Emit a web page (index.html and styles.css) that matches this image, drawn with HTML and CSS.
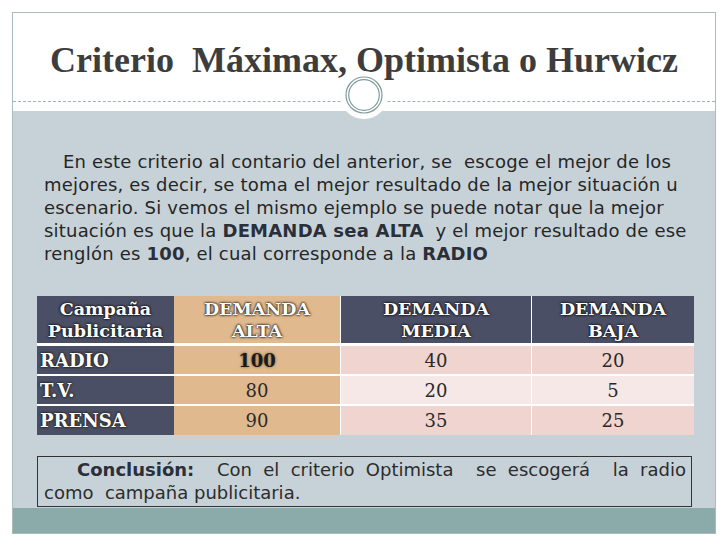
FILE: index.html
```html
<!DOCTYPE html>
<html lang="es">
<head>
<meta charset="utf-8">
<title>Criterio Máximax, Optimista o Hurwicz</title>
<link rel="stylesheet" href="styles.css">
</head>
<body>
<div class="slide">
  <header class="head">
    <h1 class="title">Criterio&nbsp; Máximax, Optimista o Hurwicz</h1>
    <div class="ornament">
      <svg width="52" height="52" viewBox="0 0 52 52">
        <circle cx="26" cy="26" r="24" fill="#ffffff"/>
        <circle cx="26" cy="26" r="18" fill="none" stroke="#7f9c9b" stroke-width="1.2"/>
        <circle cx="26" cy="26" r="15.3" fill="none" stroke="#7f9c9b" stroke-width="1.2"/>
      </svg>
    </div>
  </header>
  <main class="band">
    <p class="intro"><span class="indent"></span>En este criterio al contario del anterior, se&nbsp; escoge el mejor de los<br>mejores, es decir, se toma el mejor resultado de la mejor situación u<br>escenario. Si vemos el mismo ejemplo se puede notar que la mejor<br>situación es que la <b>DEMANDA sea ALTA</b>&nbsp; y el mejor resultado de ese<br>renglón es <b>100</b>, el cual corresponde a la <b>RADIO</b></p>
    <table class="grid">
      <thead>
        <tr>
          <th class="c1">Campaña<br>Publicitaria</th>
          <th class="c2 alta">DEMANDA<br>ALTA</th>
          <th class="c3">DEMANDA<br>MEDIA</th>
          <th class="c4">DEMANDA<br>BAJA</th>
        </tr>
      </thead>
      <tbody>
        <tr class="odd">
          <th class="label">RADIO</th>
          <td class="alta"><b class="best">100</b></td>
          <td class="sep">40</td>
          <td class="sep">20</td>
        </tr>
        <tr class="even">
          <th class="label">T.V.</th>
          <td class="alta">80</td>
          <td class="sep">20</td>
          <td class="sep">5</td>
        </tr>
        <tr class="odd last">
          <th class="label">PRENSA</th>
          <td class="alta">90</td>
          <td class="sep">35</td>
          <td class="sep">25</td>
        </tr>
      </tbody>
    </table>
    <div class="conclusion">
      <span class="line first"><b>Conclusión:</b>&nbsp; Con el criterio Optimista&nbsp; se escogerá&nbsp; la radio</span>
      <span class="line">como&nbsp; campaña publicitaria.</span>
    </div>
  </main>
  <footer class="foot"></footer>
</div>
</body>
</html>
```
FILE: styles.css
```css
html, body {
  margin: 0;
  padding: 0;
  background: #ffffff;
}

.slide {
  margin: 12px;
  width: 702px;
  height: 520px;
  border: 1px solid #a9bbbb;
  display: flex;
  flex-direction: column;
  position: relative;
}

.head {
  height: 98px;
  flex: none;
  background: #ffffff;
  position: relative;
  z-index: 2;
}

.title {
  margin: 0;
  height: 89px;
  box-sizing: border-box;
  border-bottom: 1px dashed #9fb3b4;
  display: flex;
  align-items: center;
  justify-content: center;
  padding-top: 6px;
  font-family: "Liberation Serif", serif;
  font-weight: bold;
  font-size: 36px;
  color: #3d3d3d;
  white-space: nowrap;
}

.ornament {
  position: absolute;
  left: 50%;
  top: 56px;
  margin-left: -26px;
  width: 52px;
  height: 52px;
}

.ornament svg {
  display: block;
}

.band {
  flex: 1;
  background: #c7d2d8;
  padding: 39px 0 0 0;
  display: flex;
  flex-direction: column;
}

.intro {
  margin: 0 10px 0 31px;
  font-family: "DejaVu Sans", sans-serif;
  font-size: 18px;
  letter-spacing: 0.2px;
  line-height: 23px;
  color: #262626;
  white-space: nowrap;
}

.intro b {
  color: #2a2f3a;
}

.indent {
  display: inline-block;
  width: 19px;
}

.grid {
  margin: 31px 0 0 24px;
  width: 655px;
  border-collapse: collapse;
  table-layout: fixed;
  font-family: "DejaVu Serif", serif;
}

.grid th,
.grid td {
  padding: 0;
}

.grid thead th {
  height: 47px;
  background: #4a4f65;
  color: #ffffff;
  font-size: 17.5px;
  font-weight: bold;
  line-height: 22px;
  text-align: center;
  border-bottom: 3px solid #ffffff;
  text-shadow: 0 0 3px #000000, 0 0 2px #1a1a1a;
}

.grid thead th.alta {
  background: #e1b98e;
}

.grid .c1 { width: 137px; }
.grid .c2 { width: 166px; }
.grid .c3 { width: 190px; border-left: 1px solid #ffffff; }
.grid .c4 { width: 162px; border-left: 1px solid #ffffff; }

.grid tbody th,
.grid tbody td {
  height: 28px;
  border-bottom: 2px solid #ffffff;
  font-size: 18px;
  color: #2a2a2a;
  text-align: center;
}

.grid tbody tr.last th,
.grid tbody tr.last td {
  height: 29px;
  border-bottom: 0;
}

.grid tbody .label {
  background: #4a4f65;
  color: #ffffff;
  text-align: left;
  padding-left: 3px;
  font-weight: bold;
  font-size: 18px;
  text-shadow: 0 0 3px #1d1d10, 0 0 2px #1d1d10;
}

.grid tbody td.alta {
  background: #e1b98e;
}

.grid tbody tr.odd td.sep {
  background: #efd4d0;
}

.grid tbody tr.even td.sep {
  background: #f6e8e6;
}

.grid td.sep {
  border-left: 1px solid #ffffff;
}

.best {
  color: #1a1a1a;
  text-shadow: 0 0 3px rgba(0, 0, 0, 0.55);
}

.conclusion {
  margin: 21px 0 0 24px;
  width: 642px;
  border: 1px solid #333333;
  padding: 1px 5px 2px 6px;
  font-family: "DejaVu Sans", sans-serif;
  font-size: 18px;
  line-height: 23px;
  color: #2c2c2c;
}

.conclusion .line {
  display: block;
  white-space: nowrap;
}

.conclusion .first {
  text-indent: 33px;
  text-align: justify;
  text-align-last: justify;
  white-space: normal;
}

.conclusion b {
  color: #2a2f3a;
}

.foot {
  height: 25px;
  flex: none;
  background: #8aabaa;
}
```
